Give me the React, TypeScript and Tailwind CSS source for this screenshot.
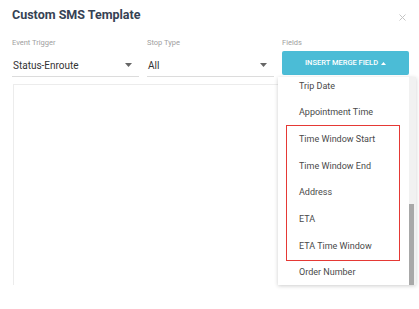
import React from 'react';

const FIELDS_BEFORE = ['Trip Date', 'Appointment Time'];
const FIELDS_MARKED = ['Time Window Start', 'Time Window End', 'Address', 'ETA', 'ETA Time Window'];
const FIELDS_AFTER = ['Order Number'];

const Caret: React.FC<{ up?: boolean; className?: string }> = ({ up, className }) => (
  <svg width="7" height="4" viewBox="0 0 7 4" className={className}>
    <path d={up ? 'M0 4 L3.5 0 L7 4 Z' : 'M0 0 L3.5 4 L7 0 Z'} fill="currentColor" />
  </svg>
);

const SelectBox: React.FC<{ label: string; value: string }> = ({ label, value }) => (
  <div className="flex flex-col">
    <span className="text-[7.5px] leading-[10px] text-[#a0a0a0]">{label}</span>
    <div className="mt-[3px] h-[26px] flex items-center justify-between border-b border-[#dcdcdc] pt-[3px] pl-[1px] pr-[7px]">
      <span className="text-[10px] text-[#333]">{value}</span>
      <Caret className="text-[#666]" />
    </div>
  </div>
);

const Item: React.FC<{ text: string }> = ({ text }) => (
  <div className="h-[26.7px] flex items-center text-[9px] text-[#4a4a4a]">{text}</div>
);

const App: React.FC = () => {
  return (
    <div className="w-[419px] h-[309px] bg-white overflow-hidden" style={{ fontFamily: 'Roboto, "Liberation Sans", sans-serif' }}>
      {/* header */}
      <div className="flex items-center justify-between pl-[12px] pr-[12px] pt-[7px]">
        <h1 className="text-[12.5px] leading-[16px] font-bold text-[#364254]">Custom SMS Template</h1>
        <svg width="7" height="7" viewBox="0 0 7 7" className="mt-[4px] mr-[1px]">
          <path d="M0.5 0.5 L6.5 6.5 M6.5 0.5 L0.5 6.5" stroke="#c4c4c4" strokeWidth="1" />
        </svg>
      </div>

      {/* fields row */}
      <div className="grid grid-cols-3 gap-2 pl-[12px] pr-[10px] mt-[15px]">
        <SelectBox label="Event Trigger" value="Status-Enroute" />
        <SelectBox label="Stop Type" value="All" />
        <div className="flex flex-col">
          <span className="text-[7.5px] leading-[10px] text-[#a0a0a0]">Fields</span>
          <div className="relative mt-[3px]">
            <button className="w-full h-[24px] bg-[#4bbcd6] rounded-[2px] text-white text-[7.5px] font-medium flex items-center justify-center gap-[3px]">
              INSERT MERGE FIELD
              <Caret up className="w-[5px] h-[3px]" />
            </button>

            {/* dropdown */}
            <div className="absolute z-10 top-full mt-[2px] -left-[4px] w-[138px] h-[208px] bg-white overflow-hidden shadow-[0_1px_4px_rgba(0,0,0,0.2)]">
              <div className="-mt-[4px] pr-[7px]">
                {FIELDS_BEFORE.map((f) => (
                  <div key={f} className="pl-[21px]"><Item text={f} /></div>
                ))}
                <div className="ml-[9px] mr-[10px] pl-[12px] outline outline-1 outline-[#e53935]">
                  {FIELDS_MARKED.map((f) => (
                    <Item key={f} text={f} />
                  ))}
                </div>
                {FIELDS_AFTER.map((f) => (
                  <div key={f} className="pl-[21px]"><Item text={f} /></div>
                ))}
              </div>
              {/* scrollbar */}
              <div className="absolute top-0 right-0 w-[7px] h-full bg-[#f1f1f1]">
                <div className="mt-[127px] w-[5px] h-[81px] bg-[#a8a8a8]" />
              </div>
            </div>
          </div>
        </div>
      </div>

      {/* message body */}
      <div className="ml-[13px] mr-[10px] mt-[7px] h-[201px] border-l border-t border-r border-[#ececec]" />
    </div>
  );
};

export default App;
